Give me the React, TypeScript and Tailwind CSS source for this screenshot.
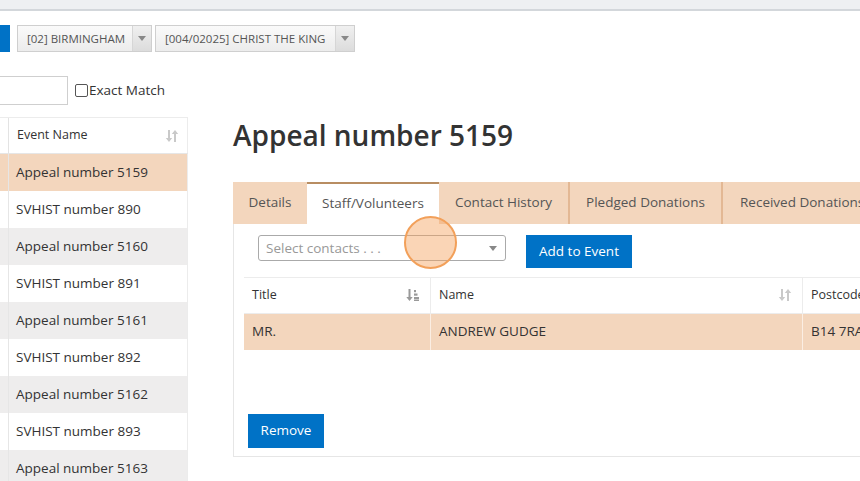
import React from "react";

const SortBoth = () => (
  <svg width="14" height="14" viewBox="0 0 14 14" fill="#c9c9c9">
    <path d="M3 1h2v8h2.2L4 13 0.8 9H3z" />
    <path d="M9 13h2V5h2.2L10 1 6.8 5H9z" />
  </svg>
);

const SortDown = () => (
  <svg width="14" height="14" viewBox="0 0 14 14" fill="#9a9a9a">
    <path d="M2.5 1h2v8h2.2L3.5 13 0.3 9h2.2z" />
    <rect x="8" y="2" width="2" height="2.2" />
    <rect x="8" y="5.5" width="3.5" height="2.2" />
    <rect x="8" y="9" width="5" height="2.2" />
    <rect x="8" y="11.6" width="5" height="1.4" />
  </svg>
);

const Caret = () => (
  <svg width="8" height="5" viewBox="0 0 8 5" fill="#888">
    <path d="M0 0h8L4 5z" />
  </svg>
);

const listRows = [
  { name: "Appeal number 5159", kind: "sel" },
  { name: "SVHIST number 890", kind: "w" },
  { name: "Appeal number 5160", kind: "g" },
  { name: "SVHIST number 891", kind: "w" },
  { name: "Appeal number 5161", kind: "g" },
  { name: "SVHIST number 892", kind: "w" },
  { name: "Appeal number 5162", kind: "g" },
  { name: "SVHIST number 893", kind: "w" },
  { name: "Appeal number 5163", kind: "g" },
];

export default function App() {
  return (
    <div
      className="w-[860px] h-[481px] overflow-hidden bg-white text-[#333] relative"
      style={{ fontFamily: '"Open Sans", "Noto Sans", sans-serif' }}
    >
      <div className="h-[11px] bg-[#eef0f2] border-b-[2px] border-[#d3d7db]" />

      {/* filter row */}
      <div className="mt-[14px] flex items-center h-[27px]">
        <div className="w-[10px] h-[27px] bg-[#0072c6]" />
        <div className="ml-[7px] w-[135px] h-[27px] flex border border-[#cfcfcf] bg-gradient-to-b from-[#fafafa] to-[#ececec]">
          <div className="flex-1 flex items-center pl-[9px] text-[11.5px] text-[#555] whitespace-nowrap">[02] BIRMINGHAM</div>
          <div className="w-[19px] border-l border-[#d6d6d6] flex items-center justify-center bg-gradient-to-b from-[#f0f0f0] to-[#dcdcdc]">
            <Caret />
          </div>
        </div>
        <div className="ml-[3px] w-[200px] h-[27px] flex border border-[#cfcfcf] bg-gradient-to-b from-[#fafafa] to-[#ececec]">
          <div className="flex-1 flex items-center pl-[9px] text-[11.5px] text-[#555] whitespace-nowrap">[004/02025] CHRIST THE KING</div>
          <div className="w-[19px] border-l border-[#d6d6d6] flex items-center justify-center bg-gradient-to-b from-[#f0f0f0] to-[#dcdcdc]">
            <Caret />
          </div>
        </div>
      </div>

      {/* search row */}
      <div className="mt-[24px] flex items-center h-[29px]">
        <div className="w-[68px] h-[29px] border border-[#cfcfcf] border-l-0 bg-white" />
        <div className="ml-[7px] w-[13px] h-[13px] border border-[#555] rounded-[2px] bg-white" />
        <span className="ml-[1px] text-[13.5px] text-[#333]">Exact Match</span>
      </div>

      {/* main */}
      <div className="mt-[12px] flex">
        {/* left list */}
        <div className="w-[188px] shrink-0 border-t border-[#ececec]">
          <div className="flex h-[36px] bg-white border-b border-[#e6e6e6]">
            <div className="w-[9px] border-r border-[#e3e3e3]" />
            <div className="flex-1 flex items-center justify-between pl-[8px] pr-[8px] border-r border-[#ececec] text-[12.5px]">
              <span>Event Name</span>
              <SortBoth />
            </div>
          </div>
          {listRows.map((r) => (
            <div
              key={r.name}
              className={
                "flex h-[37px] " +
                (r.kind === "sel" ? "bg-[#f3d6bd]" : r.kind === "g" ? "bg-[#eeeded]" : "bg-white")
              }
            >
              <div className="w-[9px] border-r border-[#e6e6e6]" />
              <div className="flex-1 flex items-center pl-[7px] pb-[1px] border-r border-[#ececec] text-[13.5px] text-[#333] whitespace-nowrap">
                {r.name}
              </div>
            </div>
          ))}
        </div>

        {/* right */}
        <div className="ml-[45px] flex-1 min-w-0">
          <h1 className="text-[28px] leading-[36px] font-semibold text-[#333] whitespace-nowrap">Appeal number 5159</h1>

          <div className="mt-[29px] w-[700px]">
            <div className="flex h-[42px] bg-[#f3d6bd] text-[13.5px] text-[#555] whitespace-nowrap">
              <div className="w-[74px] flex items-center justify-center pb-[1px]">Details</div>
              <div className="w-[132px] flex items-center justify-center pb-[1px] bg-white border-t-[2px] border-[#b88d62]">Staff/Volunteers</div>
              <div className="w-[131px] flex items-center justify-center pb-[1px] border-r-[2px] border-[#e3b894]">Contact History</div>
              <div className="w-[153px] flex items-center justify-center pb-[1px] border-r-[2px] border-[#e3b894]">Pledged Donations</div>
              <div className="pl-[17px] flex items-center pb-[1px]">Received Donations</div>
            </div>

            <div className="h-[233px] border-l border-b border-[#e6e6e6] bg-white">
              <div className="pt-[11px] pl-[24px] flex items-start">
                <div className="w-[248px] h-[26px] border border-[#aaa] rounded-[3px] flex items-center justify-between pl-[7px] pr-[8px] text-[13.5px] text-[#999]">
                  <span>Select contacts . . .</span>
                  <Caret />
                </div>
                <div className="ml-[20px] w-[106px] h-[33px] bg-[#0072c6] text-white text-[13.5px] flex items-center justify-center">
                  Add to Event
                </div>
              </div>

              <div className="mt-[9px] ml-[10px] border-t border-[#ececec]">
                <div className="flex h-[36px] text-[12.5px] bg-white border-b border-[#ececec]">
                  <div className="w-[187px] flex items-center justify-between pl-[8px] pr-[10px] pb-[1px] border-r border-[#ececec]">
                    <span>Title</span>
                    <SortDown />
                  </div>
                  <div className="w-[372px] flex items-center justify-between pl-[8px] pr-[10px] pb-[1px] border-r border-[#ececec]">
                    <span>Name</span>
                    <SortBoth />
                  </div>
                  <div className="flex-1 flex items-center pl-[8px] pb-[1px] whitespace-nowrap">Postcode</div>
                </div>
                <div className="flex h-[36px] text-[13.5px] bg-[#f3d6bd]">
                  <div className="w-[187px] flex items-center pl-[8px] pb-[1px] border-r border-[#fbeee3]">MR.</div>
                  <div className="w-[372px] flex items-center pl-[8px] pb-[1px] border-r border-[#fbeee3]">ANDREW GUDGE</div>
                  <div className="flex-1 flex items-center pl-[8px] pb-[1px] whitespace-nowrap">B14 7RA</div>
                </div>
              </div>

              <div className="mt-[64px] ml-[14px] w-[76px] h-[34px] bg-[#0072c6] text-white text-[13.5px] flex items-center justify-center pb-[1px]">
                Remove
              </div>
            </div>
          </div>
        </div>
      </div>

      {/* cursor highlight */}
      <div className="absolute left-[404px] top-[216px] w-[53px] h-[53px] rounded-full bg-[#f5a25d]/45 border-[2px] border-[#f2a05a]" />
    </div>
  );
}
